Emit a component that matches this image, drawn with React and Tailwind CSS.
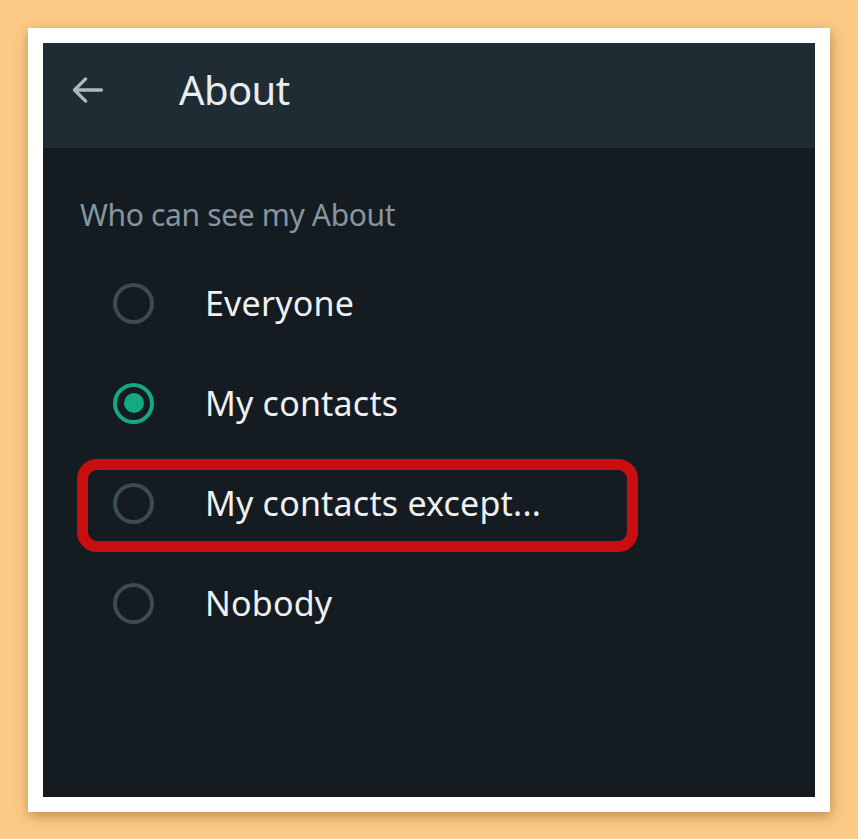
import React, { useState } from 'react'

const options = [
  { id: 'everyone', label: 'Everyone' },
  { id: 'contacts', label: 'My contacts' },
  { id: 'except', label: 'My contacts except...' },
  { id: 'nobody', label: 'Nobody' }
]

function Radio({ checked }) {
  return (
    <div
      className={`w-[41px] h-[41px] rounded-full border-[4px] flex items-center justify-center shrink-0 ${
        checked ? 'border-[#15a884]' : 'border-[#3b4a54]'
      }`}
    >
      {checked && <div className="w-[20px] h-[20px] rounded-full bg-[#15a884]"></div>}
    </div>
  )
}

function App() {
  const [selected, setSelected] = useState('contacts')

  return (
    <div className="w-[858px] h-[839px] bg-[#fdc987] pt-[28px] pl-[28px]" style={{ fontFamily: '"Noto Sans", "Open Sans", sans-serif' }}>
      <div className="w-[802px] h-[784px] bg-white p-[15px] shadow-[1px_4px_12px_rgba(120,80,20,0.5)]">
        <div className="w-full h-full bg-[#141b21] flex flex-col">
          <div className="h-[105px] bg-[#202c33] flex items-center pl-[26px] pb-[12px] shrink-0">
            <svg width="38" height="38" viewBox="0 0 24 24" fill="none" stroke="#aebac1" strokeWidth="2.1" strokeLinecap="round" strokeLinejoin="round">
              <path d="M20.5 12H4" />
              <path d="M10.5 5l-7 7 7 7" />
            </svg>
            <h1 className="ml-[72px] text-[40px] text-[#e9edef] leading-none tracking-[-0.6px]">About</h1>
          </div>

          <div className="pt-[49px] pl-[37px] text-[30px] leading-[36px] text-[#8696a0] tracking-[-0.35px]">
            Who can see my About
          </div>

          <div className="mt-[20px] flex flex-col">
            {options.map(opt => (
              <div
                key={opt.id}
                onClick={() => setSelected(opt.id)}
                className="relative h-[100px] flex items-center pl-[70px] gap-[51px] cursor-pointer"
              >
                <Radio checked={selected === opt.id} />
                <span className="text-[34px] leading-[40px] text-[#eef1f2] tracking-[0.2px]">{opt.label}</span>
                {opt.id === 'except' && (
                  <div className="absolute left-[34px] top-[6px] w-[561px] h-[93px] border-[11px] border-[#c80f10] rounded-[20px] pointer-events-none"></div>
                )}
              </div>
            ))}
          </div>
        </div>
      </div>
    </div>
  )
}

export default App
